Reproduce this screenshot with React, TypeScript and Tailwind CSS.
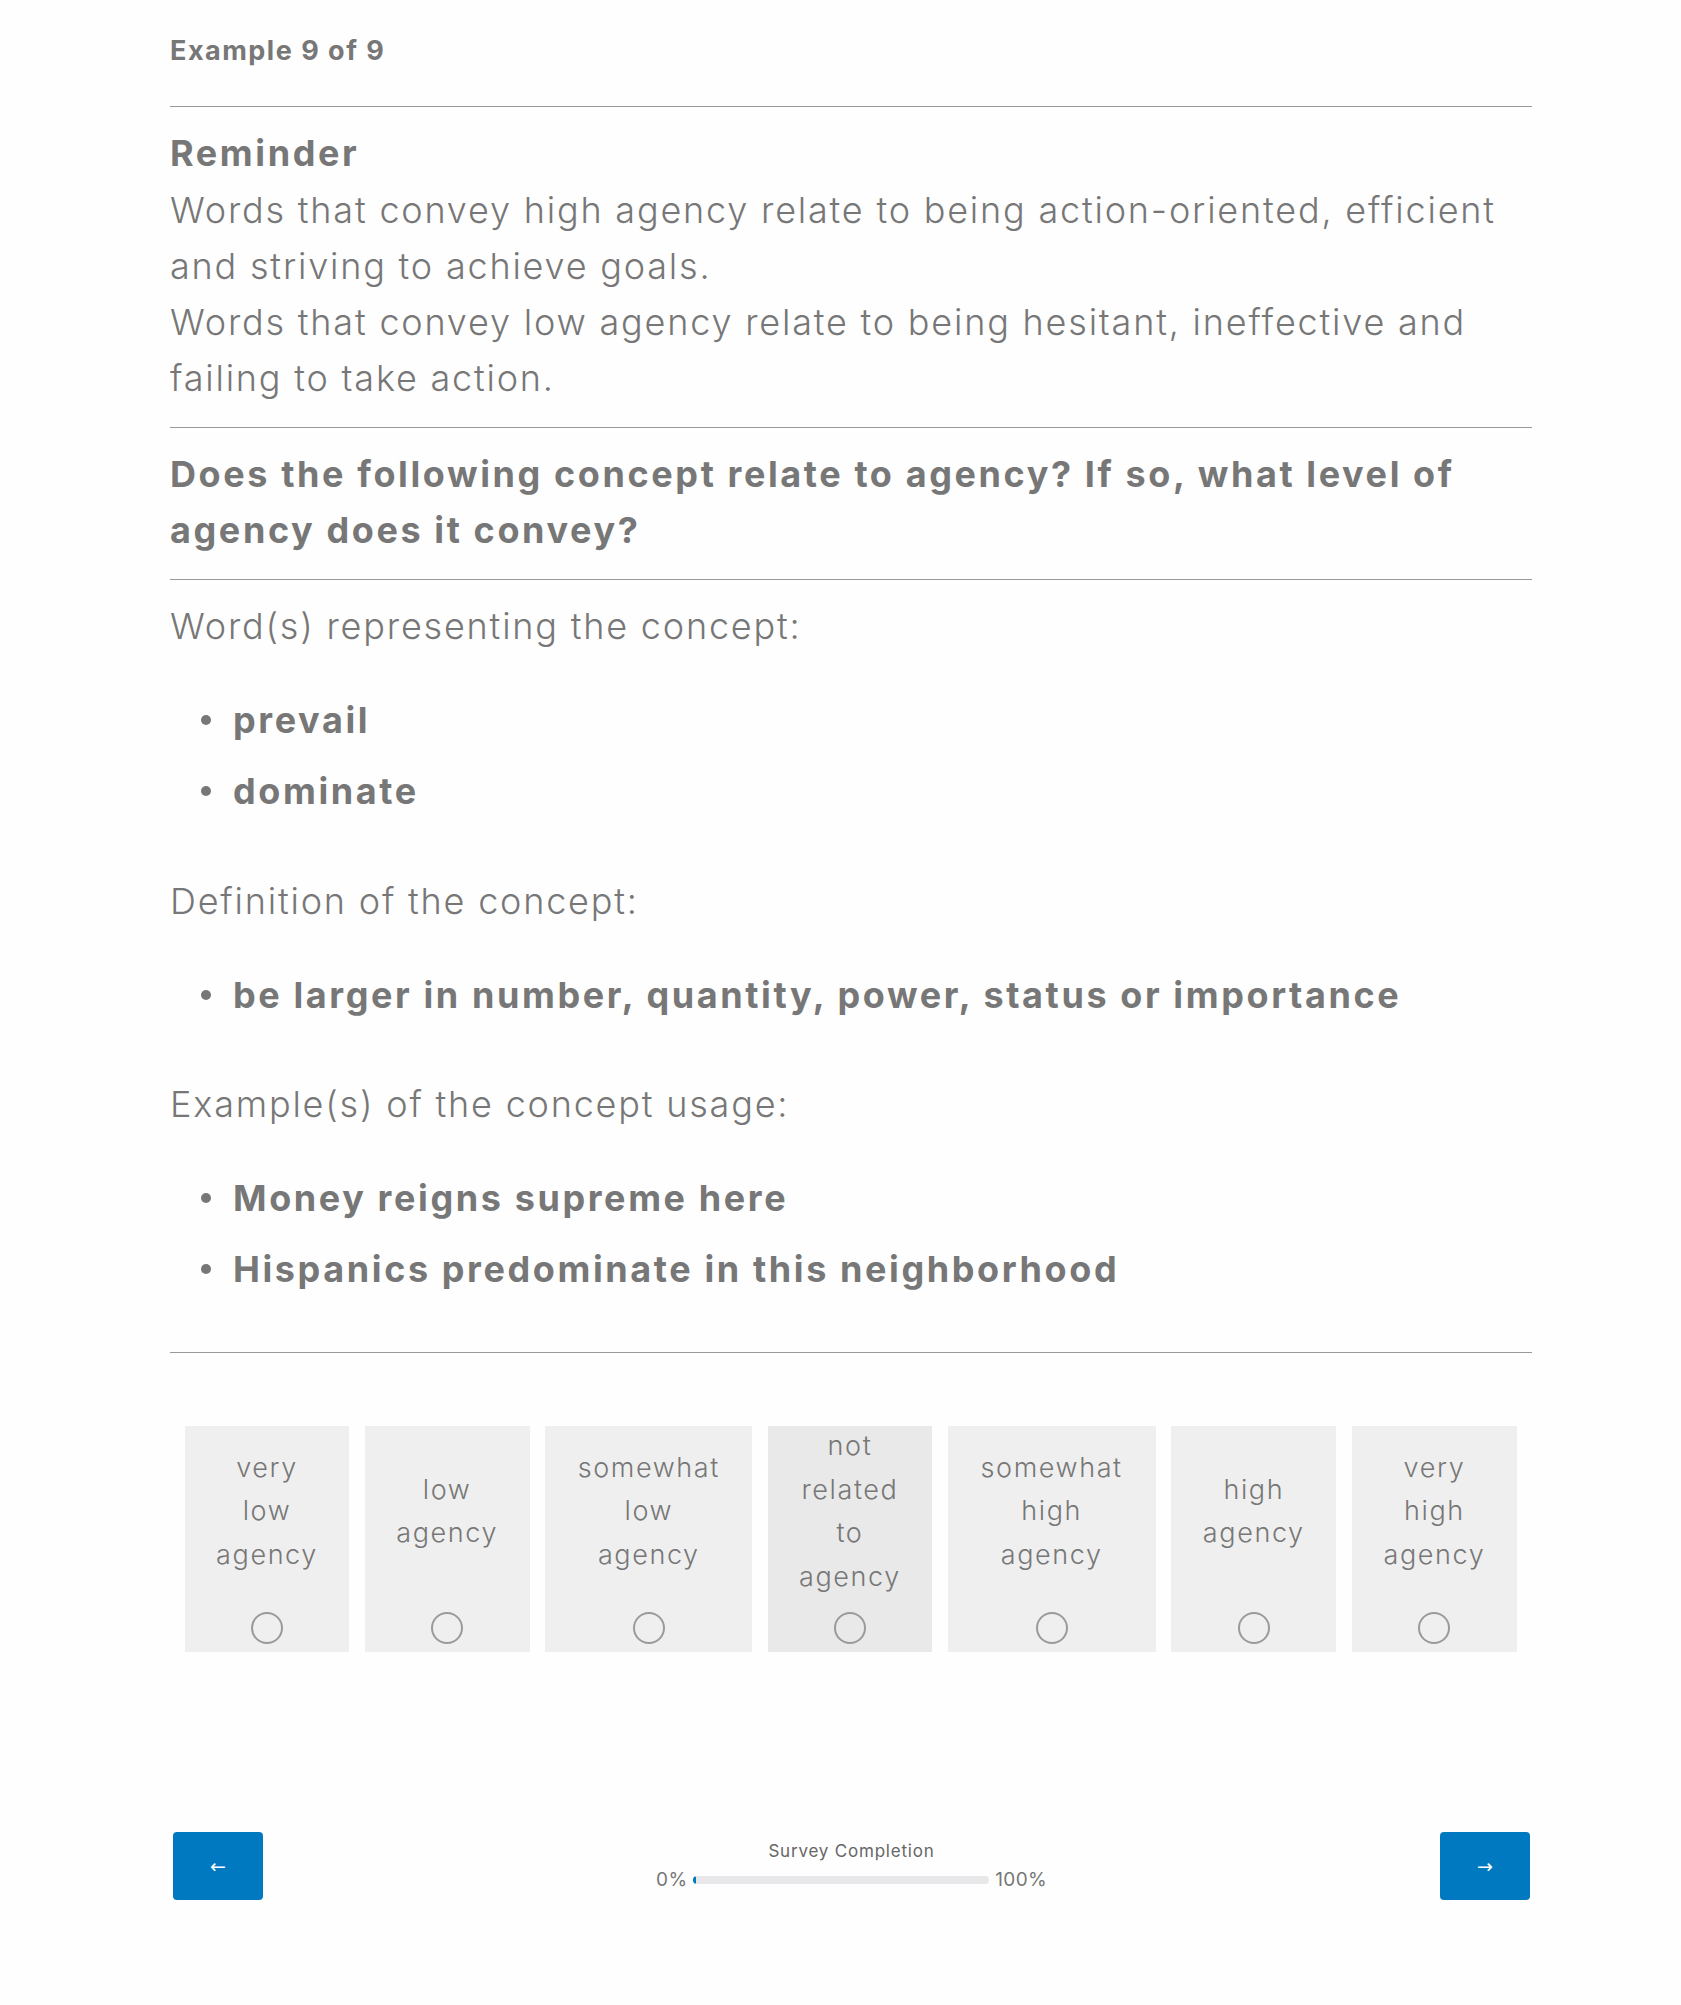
const FONT = "'Inter', 'Liberation Sans', sans-serif";

const options = [
  { words: ['very', 'low', 'agency'], w: 'w-[164px]', bg: 'bg-[#efefef]' },
  { words: ['low', 'agency'], w: 'w-[165px]', bg: 'bg-[#efefef]' },
  { words: ['somewhat', 'low', 'agency'], w: 'w-[207px]', bg: 'bg-[#efefef]' },
  { words: ['not', 'related', 'to', 'agency'], w: 'w-[164px]', bg: 'bg-[#e9e9e9]' },
  { words: ['somewhat', 'high', 'agency'], w: 'w-[208px]', bg: 'bg-[#efefef]' },
  { words: ['high', 'agency'], w: 'w-[165px]', bg: 'bg-[#efefef]' },
  { words: ['very', 'high', 'agency'], w: 'w-[165px]', bg: 'bg-[#efefef]' },
];

function Bullet({ children }: { children: React.ReactNode }) {
  return (
    <li className="flex items-center gap-[22px] pl-[31px] leading-[56px]">
      <span className="h-[10px] w-[10px] shrink-0 rounded-full bg-[#777]" />
      <span>{children}</span>
    </li>
  );
}

const body = 'text-[36px] font-light leading-[56px] tracking-[1.8px]';
const bold = 'text-[36px] font-bold leading-[56px] tracking-[2.6px]';

export default function App() {
  return (
    <div className="min-h-[2005px] w-full bg-[#fefefe] text-[#777]" style={{ fontFamily: FONT }}>
      <div className="ml-[170px] w-[1362px] pt-[33px]">
        <div className="text-[27px] font-bold leading-[36px] tracking-[1.5px]">Example 9 of 9</div>
        <div className="mt-[37px] h-px bg-[#999]" />
        <div className={`mt-[18px] ${bold}`}>Reminder</div>
        <div className={`mt-px ${body}`}>
          Words that convey high agency relate to being action-oriented, efficient
          <br />
          and striving to achieve goals.
          <br />
          Words that convey low agency relate to being hesitant, ineffective and
          <br />
          failing to take action.
        </div>
        <div className="mt-[21px] h-px bg-[#999]" />
        <div className={`mt-[18px] ${bold}`}>
          Does the following concept relate to agency? If so, what level of
          <br />
          agency does it convey?
        </div>
        <div className="mt-[21px] h-px bg-[#999]" />
        <div className={`mt-[18px] ${body}`}>Word(s) representing the concept:</div>
        <ul className={`mt-[38px] flex flex-col gap-[15px] ${bold}`}>
          <Bullet>prevail</Bullet>
          <Bullet>dominate</Bullet>
        </ul>
        <div className={`mt-[54px] ${body}`}>Definition of the concept:</div>
        <ul className={`mt-[38px] flex flex-col gap-[15px] ${bold}`}>
          <Bullet>be larger in number, quantity, power, status or importance</Bullet>
        </ul>
        <div className={`mt-[53px] ${body}`}>Example(s) of the concept usage:</div>
        <ul className={`mt-[38px] flex flex-col gap-[15px] ${bold}`}>
          <Bullet>Money reigns supreme here</Bullet>
          <Bullet>Hispanics predominate in this neighborhood</Bullet>
        </ul>
        <div className="mt-[55px] h-px bg-[#999]" />
        <div className="ml-[15px] mt-[73px] flex w-[1332px] justify-between">
          {options.map((o, i) => (
            <div key={i} className={`flex h-[226px] flex-col ${o.w} ${o.bg}`}>
              <div className="flex h-[170px] flex-col items-center justify-center text-[27px] font-light leading-[43.5px] tracking-[1.6px]">
                {o.words.map((w) => (
                  <div key={w}>{w}</div>
                ))}
              </div>
              <div className="flex flex-1 items-center justify-center pt-[8px]">
                <span className="block h-[32px] w-[32px] rounded-full border-2 border-[#9a9a9a]" />
              </div>
            </div>
          ))}
        </div>
        <div className="mt-[180px] flex items-center justify-between pl-[3px] pr-[2px]">
          <button
            className="flex h-[68px] w-[90px] items-center justify-center rounded-[4px] bg-[#0079c1] text-[19px] text-white"
            style={{ fontFamily: "'DejaVu Sans', sans-serif" }}
          >
            ←
          </button>
          <div className="flex flex-col items-center">
            <div className="text-[17px] leading-[20px] tracking-[0.8px] text-[#666]">Survey Completion</div>
            <div className="mt-[8px] flex items-center gap-[6px] text-[19px] leading-[22px] tracking-[0.3px]">
              <span>0%</span>
              <div className="relative h-[8px] w-[296px] overflow-hidden rounded-full bg-[#e8e8ea]">
                <div className="h-full w-[3px] rounded-full bg-[#0079c1]" />
              </div>
              <span>100%</span>
            </div>
          </div>
          <button
            className="flex h-[68px] w-[90px] items-center justify-center rounded-[4px] bg-[#0079c1] text-[19px] text-white"
            style={{ fontFamily: "'DejaVu Sans', sans-serif" }}
          >
            →
          </button>
        </div>
      </div>
    </div>
  );
}
